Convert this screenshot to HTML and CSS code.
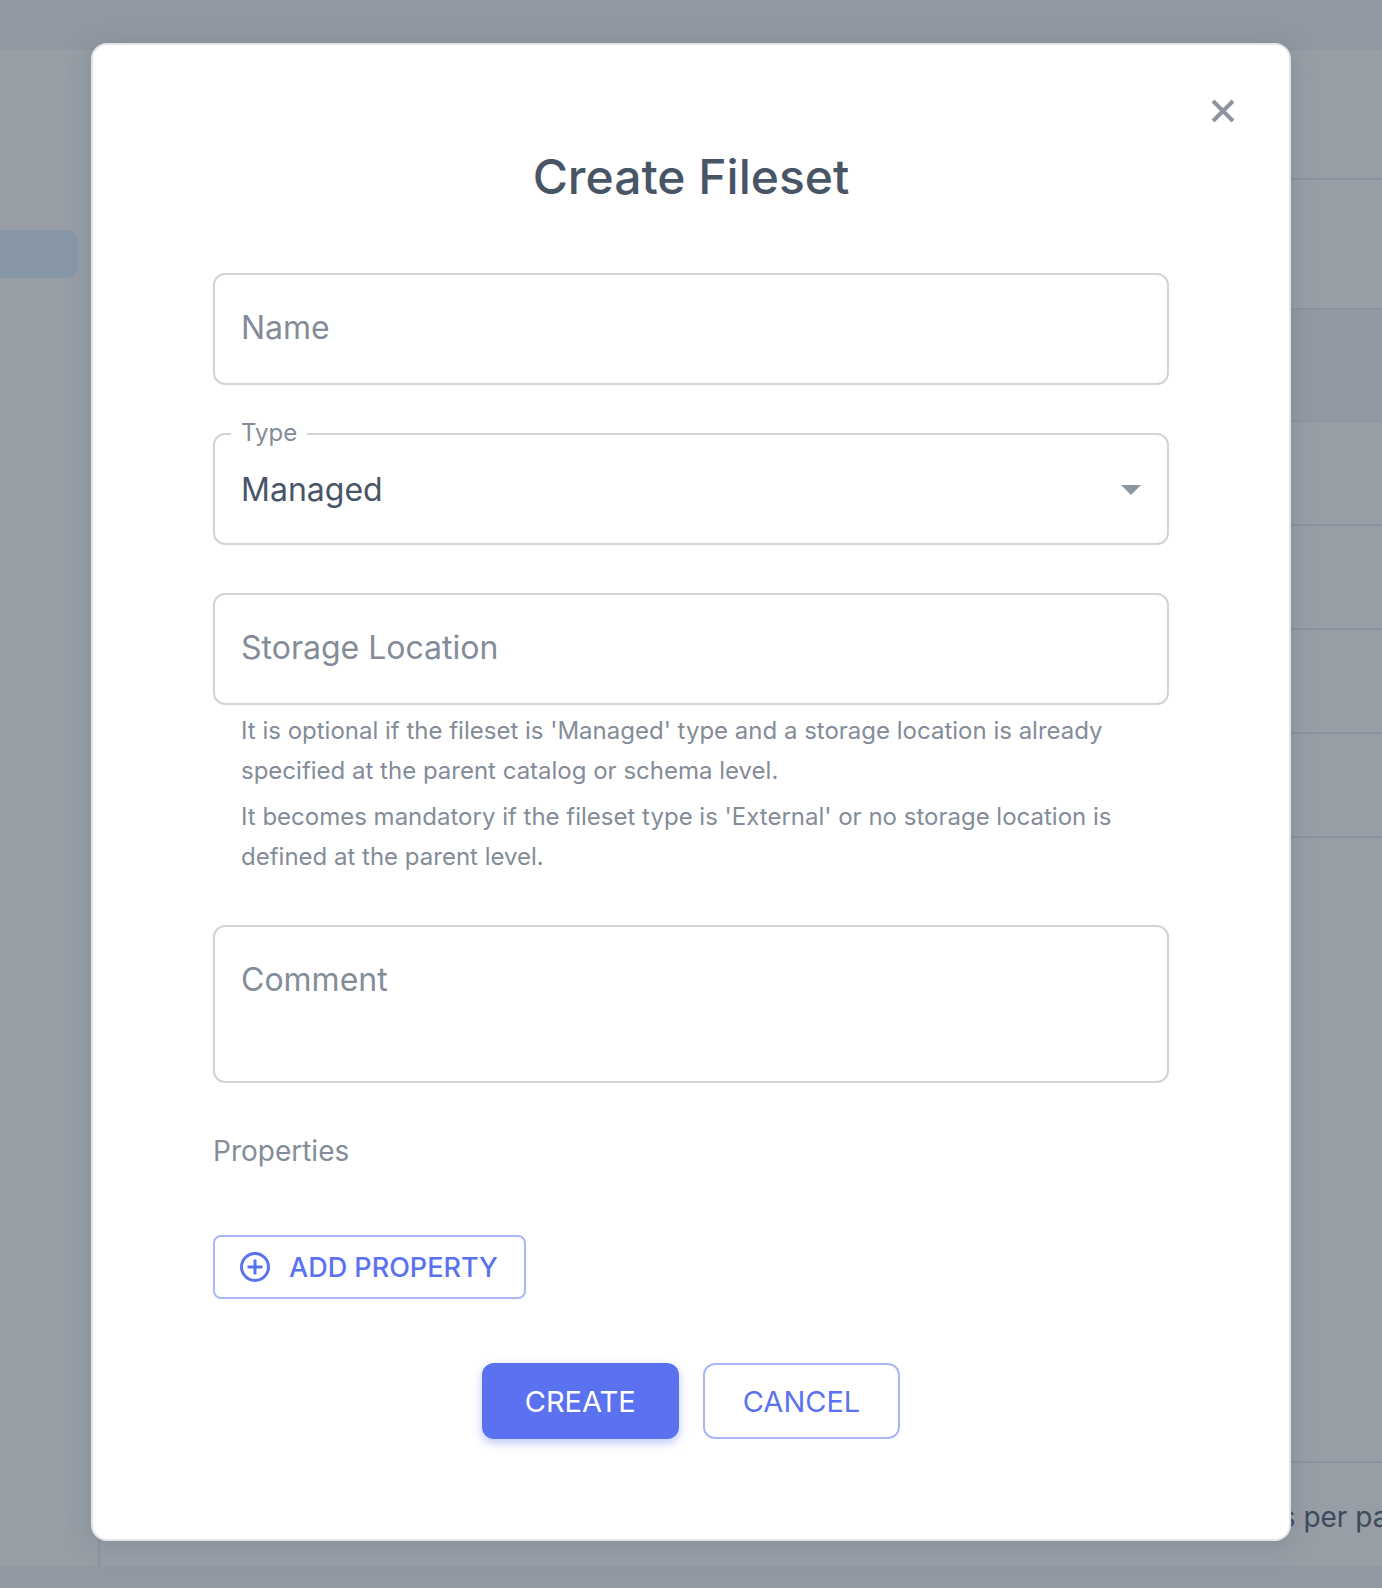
FILE: index.html
```html
<!DOCTYPE html>
<html lang="en">
<head>
  <meta charset="utf-8">
  <meta name="viewport" content="width=device-width, initial-scale=1">
  <title>Create Fileset</title>
  <link rel="stylesheet" href="styles.css">
</head>
<body>
  <div class="app">
    <div class="topbar"></div>
    <div class="workspace">
      <nav class="sidebar"><div class="tree-item"></div></nav>
      <main class="content">
        <div class="row row-tall"></div>
        <div class="row row-tall"></div>
        <div class="row row-head"></div>
        <div class="row"></div>
        <div class="row"></div>
        <div class="row"></div>
        <div class="row"></div>
        <div class="row row-fill"></div>
        <div class="pagination"><span class="per-page">Rows per page:</span></div>
      </main>
    </div>
    <div class="bottombar"></div>
  </div>

  <div class="overlay">
    <section class="dialog" role="dialog" aria-modal="true" aria-labelledby="dialog-title">
      <button class="close" type="button" aria-label="Close">
        <svg viewBox="0 0 40 40" aria-hidden="true"><path d="M10 10 30 30M30 10 10 30"/></svg>
      </button>
      <h1 class="title" id="dialog-title">Create Fileset</h1>
      <form class="form">
        <div class="field">
          <input class="control" id="name" type="text">
          <label class="label" for="name">Name</label>
        </div>
        <div class="field">
          <select class="control" id="type">
            <option>Managed</option>
            <option>External</option>
          </select>
          <label class="label label-floating" for="type">Type</label>
          <svg class="arrow" viewBox="0 0 24 24" aria-hidden="true"><path d="m7 10 5 5 5-5z"/></svg>
        </div>
        <div class="field-group">
          <div class="field">
            <input class="control" id="location" type="text" aria-describedby="location-help">
            <label class="label" for="location">Storage Location</label>
          </div>
          <div class="help" id="location-help">
            <p>It is optional if the fileset is 'Managed' type and a storage location is already specified at the parent catalog or schema level.</p>
            <p>It becomes mandatory if the fileset type is 'External' or no storage location is defined at the parent level.</p>
          </div>
        </div>
        <div class="field">
          <textarea class="control control-multiline" id="comment" rows="2"></textarea>
          <label class="label" for="comment">Comment</label>
        </div>
        <h2 class="section-title">Properties</h2>
        <button class="button button-outlined button-add" type="button">
          <svg viewBox="0 0 24 24" aria-hidden="true"><path d="M12 20a8 8 0 0 1-8-8 8 8 0 0 1 8-8 8 8 0 0 1 8 8 8 8 0 0 1-8 8m0-18A10 10 0 0 0 2 12a10 10 0 0 0 10 10 10 10 0 0 0 10-10A10 10 0 0 0 12 2m1 5h-2v4H7v2h4v4h2v-4h4v-2h-4z"/></svg>
          ADD PROPERTY
        </button>
        <div class="actions">
          <button class="button button-filled" type="submit">CREATE</button>
          <button class="button button-outlined" type="button">CANCEL</button>
        </div>
      </form>
    </section>
  </div>
</body>
</html>
```
FILE: styles.css
```css
* {
  box-sizing: border-box;
}

body {
  margin: 0;
  min-height: 100vh;
  display: grid;
  grid-template: 1fr / minmax(0, 1fr);
  overflow-x: hidden;
  background: #9098a2;
  color: #485566;
  font-family: Inter, "Open Sans", sans-serif;
  font-size: 32px;
}

.app,
.overlay {
  grid-area: 1 / 1;
}

/* Dimmed page behind the dialog */

.app {
  display: flex;
  flex-direction: column;
  overflow: hidden;
}

.topbar {
  height: 50px;
}

.bottombar {
  height: 22px;
}

.workspace {
  flex: 1;
  display: flex;
  background: #979ea6;
}

.sidebar {
  width: 100px;
  padding: 180px 20px 0 0;
  border-right: 2px solid #8b939f;
}

.tree-item {
  height: 48px;
  border-radius: 0 12px 12px 0;
  background: #8797a8;
}

.content {
  flex: 1;
  min-width: 0;
  display: flex;
  flex-direction: column;
}

.row {
  height: 104px;
  border-bottom: 2px solid #8b939f;
}

.row-tall {
  height: 130px;
}

.row-head {
  height: 112px;
  background: #9199a4;
}

.row-fill {
  flex: 1;
}

.pagination {
  height: 103px;
  display: flex;
  align-items: center;
  justify-content: flex-end;
  margin-right: -48px;
  padding-top: 4px;
  color: #3d4a5c;
  font-size: 28px;
  white-space: nowrap;
}

/* Dialog */

.overlay {
  z-index: 1;
  display: grid;
  place-items: start center;
  padding: 43px 91px 47px;
}

.dialog {
  width: 100%;
  max-width: 1200px;
  display: flex;
  flex-direction: column;
  padding: 46px 46px 100px;
  border: 2px solid #e3e5e9;
  border-radius: 16px;
  background: #fff;
  box-shadow: 0 4px 24px rgba(76, 88, 104, 0.24);
}

.close {
  align-self: flex-end;
  width: 40px;
  height: 40px;
  padding: 0;
  border: 0;
  background: none;
  stroke: #8d959f;
  stroke-width: 4;
}

.close svg {
  display: block;
}

.title {
  margin: 14px 0 64px;
  font-size: 48px;
  font-weight: 500;
  line-height: 64px;
  text-align: center;
}

.form {
  display: flex;
  flex-direction: column;
  gap: 48px;
  padding: 0 74px;
}

.field {
  position: relative;
  display: grid;
}

.control {
  grid-area: 1 / 1;
  width: 100%;
  height: 112px;
  margin: 0;
  padding: 0 26px;
  border: 2px solid #d0d3d9;
  border-radius: 12px;
  background: none;
  color: inherit;
  font: inherit;
  appearance: none;
}

.control-multiline {
  height: 158px;
  padding: 32px 26px;
  resize: none;
}

.label {
  grid-area: 1 / 1;
  align-self: start;
  padding: 35px 28px;
  color: #838c98;
  line-height: 40px;
  pointer-events: none;
}

.label-floating {
  position: absolute;
  top: -20px;
  left: 18px;
  padding: 0 10px;
  background: #fff;
  font-size: 24px;
}

.arrow {
  grid-area: 1 / 1;
  place-self: center end;
  width: 48px;
  height: 48px;
  margin-right: 14px;
  fill: #8d959f;
  pointer-events: none;
}

.help {
  padding: 6px 28px 0;
  color: #838c98;
  font-size: 24px;
  line-height: 40px;
}

.help p {
  margin: 0 0 6px;
}

.help p:last-child {
  margin: 0;
}

.section-title {
  margin: 0 0 16px;
  color: #838c98;
  font-size: 28px;
  font-weight: 400;
  line-height: 40px;
}

.button {
  min-width: 197px;
  height: 76px;
  padding: 0 38px;
  border: 2px solid transparent;
  border-radius: 12px;
  font: inherit;
  font-size: 29px;
}

.button-filled {
  background: #5a72f0;
  color: #fff;
  box-shadow: 0 4px 10px rgba(90, 114, 240, 0.4);
}

.button-outlined {
  border-color: #a9b6f8;
  background: #fff;
  color: #5a72f0;
}

.button-add {
  align-self: flex-start;
  display: flex;
  align-items: center;
  gap: 16px;
  height: 64px;
  padding: 0 26px 0 22px;
  border-radius: 8px;
  font-size: 27px;
  font-weight: 500;
}

.button-add svg {
  width: 36px;
  height: 36px;
  fill: currentColor;
}

.actions {
  display: flex;
  justify-content: center;
  gap: 24px;
  padding-top: 16px;
}
```
